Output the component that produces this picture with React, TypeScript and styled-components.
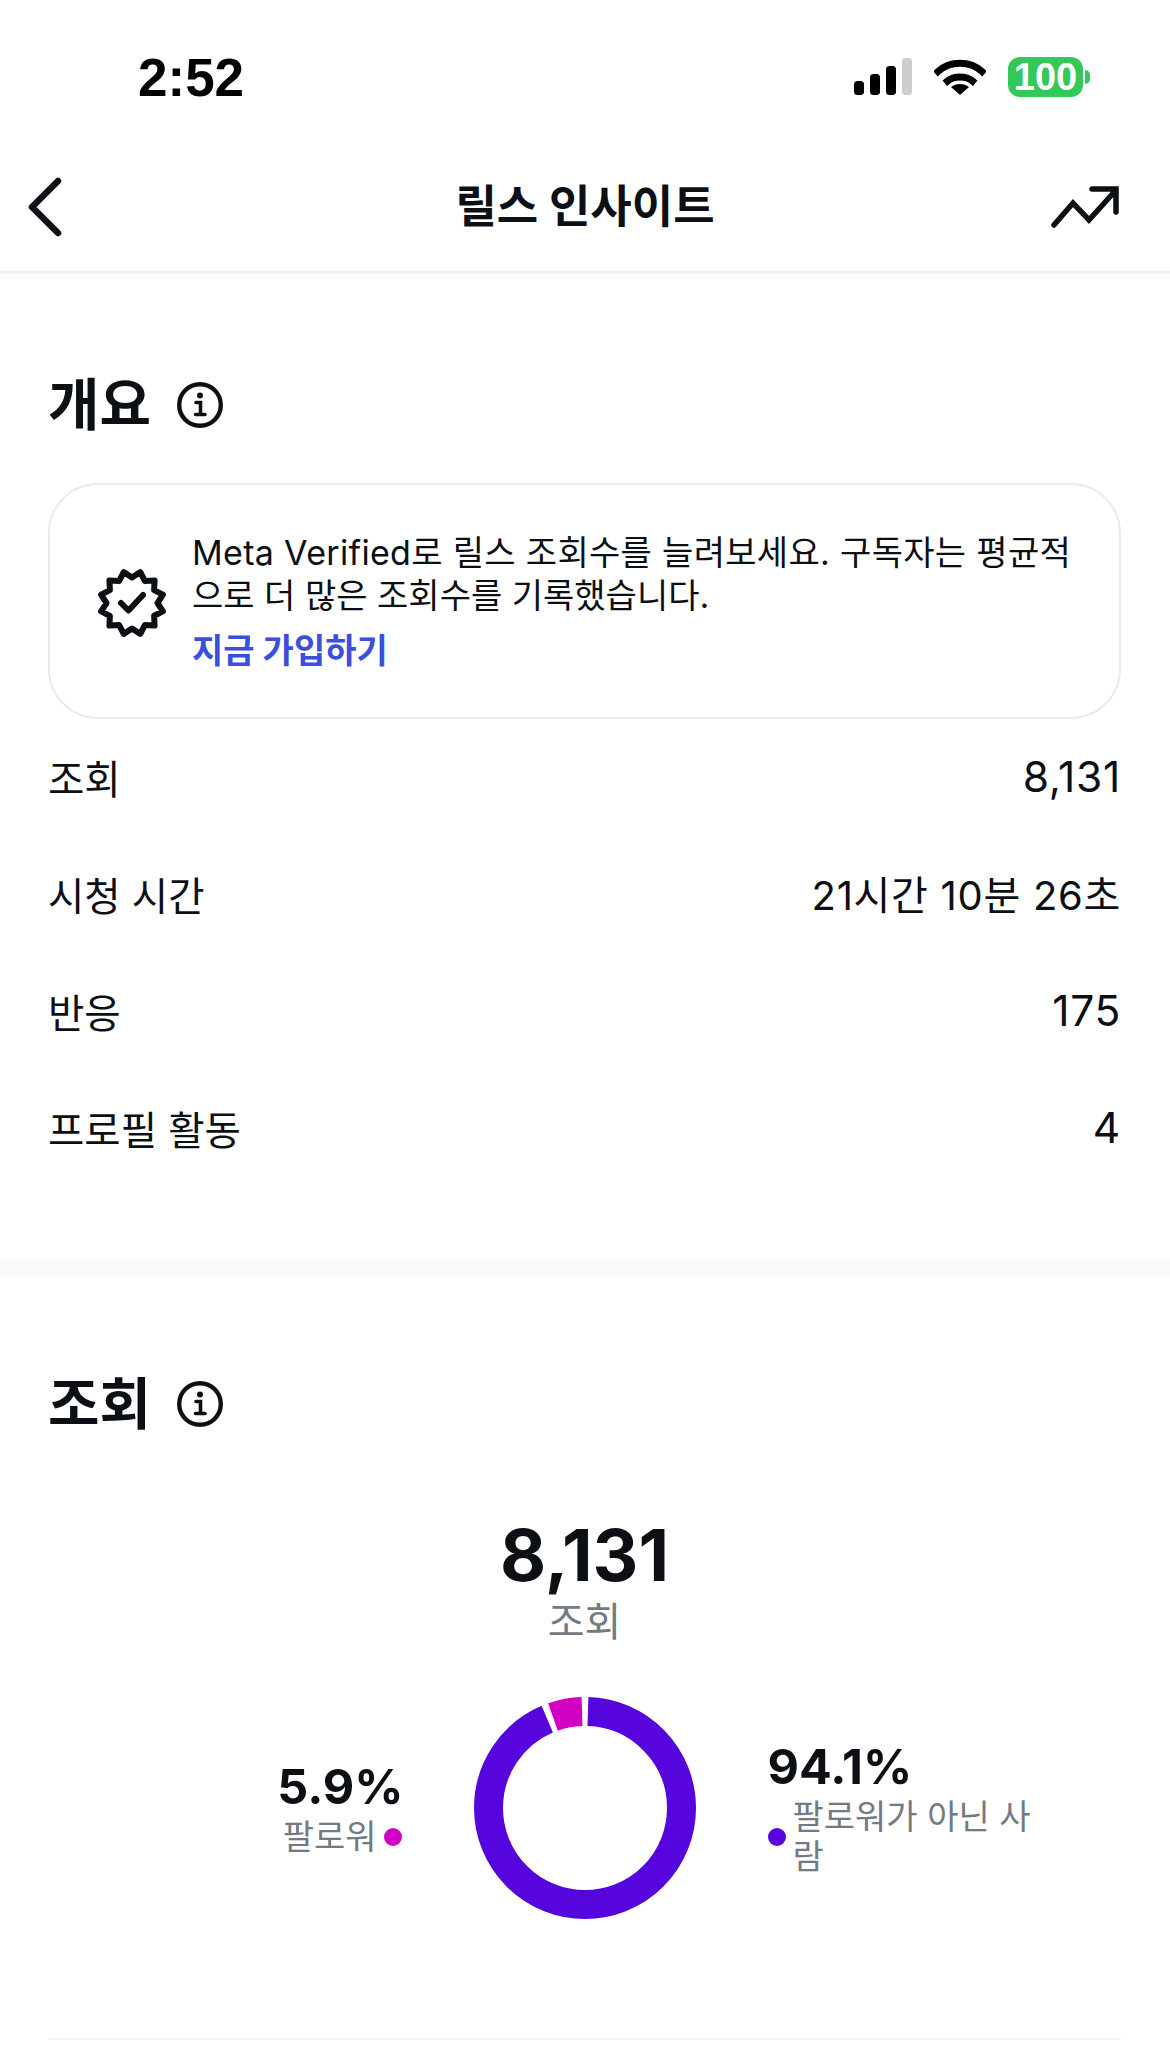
import React from "react";
import styled, { createGlobalStyle } from "styled-components";

const GlobalStyle = createGlobalStyle`
  html, body {
    margin: 0;
    padding: 0;
    background: #fff;
  }
  body {
    font-family: "Inter", "Noto Sans CJK KR", sans-serif;
    color: #0c1014;
  }
`;

const Page = styled.div`
  width: 1170px;
  height: 2058px;
  overflow: hidden;
  background: #fff;
`;

const StatusBar = styled.div`
  height: 118px;
  padding: 38px 87px 0 138px;
  box-sizing: border-box;
  display: flex;
  justify-content: space-between;
  align-items: flex-start;
`;

const Clock = styled.div`
  font-family: "Liberation Sans", sans-serif;
  font-size: 53px;
  line-height: 80px;
  font-weight: 700;
  color: #000;
`;

const StatusIcons = styled.div`
  display: flex;
  align-items: center;
  gap: 22px;
  margin-top: 19px;
`;

const Battery = styled.div`
  position: relative;
  width: 75px;
  height: 40px;
  border-radius: 12px;
  background: #34c759;
  color: #fff;
  font-family: "Liberation Sans", sans-serif;
  font-size: 38px;
  font-weight: 700;
  line-height: 40px;
  text-align: center;

  &::after {
    content: "";
    position: absolute;
    right: -7px;
    top: 13px;
    width: 5px;
    height: 14px;
    border-radius: 0 7px 7px 0;
    background: #34c759;
  }
`;

const NavBar = styled.div`
  height: 155px;
  box-sizing: border-box;
  padding: 25px 51px 0;
  display: grid;
  grid-template-columns: 1fr auto 1fr;
  align-items: center;
  border-bottom: 2px solid #eeeeee;
`;

const NavSlot = styled.div<{ $end?: boolean }>`
  display: flex;
  justify-content: ${(p) => (p.$end ? "flex-end" : "flex-start")};
  margin-left: ${(p) => (p.$end ? "0" : "-23px")};
`;

const NavTitle = styled.div`
  font-size: 45px;
  line-height: 60px;
  font-weight: 700;
`;

const ThinBand = styled.div`
  height: 6px;
  background: #fafafa;
`;

const ThickBand = styled.div`
  height: 17px;
  background: #fafafa;
`;

const Section = styled.section`
  padding: 96px 49px 72px 48px;
`;

const HeadingRow = styled.div`
  display: flex;
  align-items: center;
  gap: 26px;
  height: 60px;
`;

const Heading = styled.h2`
  margin: 0;
  font-size: 56px;
  line-height: 60px;
  font-weight: 700;
`;

const PromoCard = styled.div`
  margin-top: 48px;
  height: 236px;
  box-sizing: border-box;
  border: 2px solid #e8eaed;
  border-radius: 50px;
  padding: 0 30px 0 46px;
  display: flex;
  align-items: center;
  gap: 24px;
`;

const PromoBody = styled.div`
  flex: 1;
  font-size: 34px;
  line-height: 43px;
  margin-top: 1px;
`;

const PromoLine = styled.div<{ $wide?: boolean }>`
  white-space: nowrap;
  letter-spacing: ${(p) => (p.$wide ? "0.32px" : "0")};
`;

const PromoLink = styled.div`
  margin-top: 12px;
  color: #3b4fdd;
  font-weight: 700;
`;

const StatRow = styled.div`
  height: 117px;
  box-sizing: border-box;
  padding-bottom: 3px;
  display: flex;
  align-items: center;
  justify-content: space-between;
  font-size: 39.5px;
`;

const StatValue = styled.span<{ $numeric?: boolean }>`
  letter-spacing: 0.7px;
  font-size: ${(p) => (p.$numeric ? "42.5px" : "40px")};
`;

const ChartSection = styled.section`
  padding: 98px 49px 0 48px;
`;

const BigNumber = styled.div`
  margin-top: 81px;
  text-align: center;
  font-size: 71px;
  line-height: 80px;
  font-weight: 700;
`;

const BigLabel = styled.div`
  margin-top: 2px;
  text-align: center;
  font-size: 40px;
  line-height: 50px;
  color: #737a82;
`;

const DonutRow = styled.div`
  margin-top: 49px;
  display: flex;
  justify-content: center;
  align-items: center;
  gap: 72px;
`;

const Legend = styled.div<{ $side: "left" | "right" }>`
  width: 270px;
  display: flex;
  flex-direction: column;
  align-items: ${(p) => (p.$side === "left" ? "flex-end" : "flex-start")};
`;

const LegendValue = styled.div<{ $pull?: boolean }>`
  font-size: 48.5px;
  line-height: 56px;
  font-weight: 700;
  margin-right: ${(p) => (p.$pull ? "-2px" : "0")};
`;

const LegendLabel = styled.div`
  margin-top: 2px;
  display: flex;
  align-items: center;
  gap: 7px;
  font-size: 34px;
  line-height: 40px;
  color: #737a82;
  word-break: break-all;
`;

const Dot = styled.span<{ $color: string }>`
  flex: none;
  width: 18px;
  height: 18px;
  border-radius: 50%;
  background: ${(p) => p.$color};
`;

const BottomRule = styled.div`
  margin-top: 118px;
  height: 2px;
  background: #f3f3f3;
`;

const SignalIcon = () => (
  <svg width="58" height="38" viewBox="0 0 58 38">
    <rect x="0" y="23" width="10" height="14" rx="3.5" fill="#000" />
    <rect x="16" y="16" width="10" height="21" rx="3.5" fill="#000" />
    <rect x="32" y="8" width="10" height="29" rx="3.5" fill="#000" />
    <rect x="48" y="0" width="10" height="37" rx="3.5" fill="#cdcdcd" />
  </svg>
);

const WifiIcon = () => (
  <svg width="52" height="38" viewBox="0 0 52 38">
    <path d="M4 13.5C16 2.5 36 2.5 48 13.5" fill="none" stroke="#000" strokeWidth="7" strokeLinecap="square" />
    <path d="M13.5 23C20 17.5 32 17.5 38.5 23" fill="none" stroke="#000" strokeWidth="7" strokeLinecap="square" />
    <path d="M26 37L17 29C22 25 30 25 35 29Z" fill="#000" />
  </svg>
);

const BackIcon = () => (
  <svg width="34" height="60" viewBox="0 0 34 60">
    <path d="M30 4L4 30L30 56" fill="none" stroke="#0c1014" strokeWidth="6.5" strokeLinecap="round" strokeLinejoin="round" />
  </svg>
);

const TrendIcon = () => (
  <svg width="68" height="42" viewBox="0 0 68 42">
    <path
      d="M3 39L22 17L38 34L65 4M41 3H65V26"
      fill="none"
      stroke="#0c1014"
      strokeWidth="5.5"
      strokeLinecap="round"
      strokeLinejoin="miter"
    />
  </svg>
);

const InfoIcon = () => (
  <svg width="46" height="46" viewBox="0 0 46 46">
    <circle cx="23" cy="23" r="20.8" fill="none" stroke="#0c1014" strokeWidth="4.4" />
    <circle cx="23" cy="13.5" r="3" fill="#0c1014" />
    <path d="M19 20.5H23.5V32M18.5 32.5H28" fill="none" stroke="#0c1014" strokeWidth="3.6" strokeLinecap="round" />
  </svg>
);

const badgePoints = Array.from({ length: 24 }, (_, i) => {
  const angle = ((i * 15) * Math.PI) / 180;
  const radius = i % 2 === 0 ? 25.5 : 32;
  return `${(36 + radius * Math.sin(angle)).toFixed(1)},${(36 - radius * Math.cos(angle)).toFixed(1)}`;
}).join(" ");

const BadgeIcon = () => (
  <svg width="72" height="72" viewBox="0 0 72 72" style={{ flex: "none", marginTop: 3 }}>
    <polygon points={badgePoints} fill="none" stroke="#0c1014" strokeWidth="6" strokeLinejoin="round" />
    <path d="M25 36L32.5 43.5L47 28" fill="none" stroke="#0c1014" strokeWidth="6" strokeLinecap="round" strokeLinejoin="round" />
  </svg>
);

const Donut = () => (
  <svg width="222" height="224" viewBox="0 0 222 224" style={{ flex: "none" }}>
    <g transform="rotate(-90 111 112)" fill="none" strokeWidth="29">
      <circle cx="111" cy="112" r="96.5" stroke="#5606dc" pathLength={100} strokeDasharray="93.1 6.9" strokeDashoffset="-0.5" />
      <circle cx="111" cy="112" r="96.5" stroke="#d100c4" pathLength={100} strokeDasharray="4.9 95.1" strokeDashoffset="-94.6" />
    </g>
  </svg>
);

const stats = [
  { label: "조회", value: "8,131", numeric: true },
  { label: "시청 시간", value: "21시간 10분 26초", numeric: false },
  { label: "반응", value: "175", numeric: true },
  { label: "프로필 활동", value: "4", numeric: true },
];

export default function App() {
  return (
    <Page>
      <GlobalStyle />
      <StatusBar>
        <Clock>2:52</Clock>
        <StatusIcons>
          <SignalIcon />
          <WifiIcon />
          <Battery>100</Battery>
        </StatusIcons>
      </StatusBar>
      <NavBar>
        <NavSlot>
          <BackIcon />
        </NavSlot>
        <NavTitle>릴스 인사이트</NavTitle>
        <NavSlot $end>
          <TrendIcon />
        </NavSlot>
      </NavBar>
      <ThinBand />
      <Section>
        <HeadingRow>
          <Heading>개요</Heading>
          <InfoIcon />
        </HeadingRow>
        <PromoCard>
          <BadgeIcon />
          <PromoBody>
            <PromoLine $wide>Meta Verified로 릴스 조회수를 늘려보세요. 구독자는 평균적</PromoLine>
            <PromoLine>으로 더 많은 조회수를 기록했습니다.</PromoLine>
            <PromoLink>지금 가입하기</PromoLink>
          </PromoBody>
        </PromoCard>
        {stats.map((s) => (
          <StatRow key={s.label}>
            <span>{s.label}</span>
            <StatValue $numeric={s.numeric}>{s.value}</StatValue>
          </StatRow>
        ))}
      </Section>
      <ThickBand />
      <ChartSection>
        <HeadingRow>
          <Heading>조회</Heading>
          <InfoIcon />
        </HeadingRow>
        <BigNumber>8,131</BigNumber>
        <BigLabel>조회</BigLabel>
        <DonutRow>
          <Legend $side="left">
            <LegendValue $pull>5.9%</LegendValue>
            <LegendLabel>
              팔로워
              <Dot $color="#d100c4" />
            </LegendLabel>
          </Legend>
          <Donut />
          <Legend $side="right">
            <LegendValue>94.1%</LegendValue>
            <LegendLabel>
              <Dot $color="#5606dc" />
              <span>팔로워가 아닌 사람</span>
            </LegendLabel>
          </Legend>
        </DonutRow>
        <BottomRule />
      </ChartSection>
    </Page>
  );
}
